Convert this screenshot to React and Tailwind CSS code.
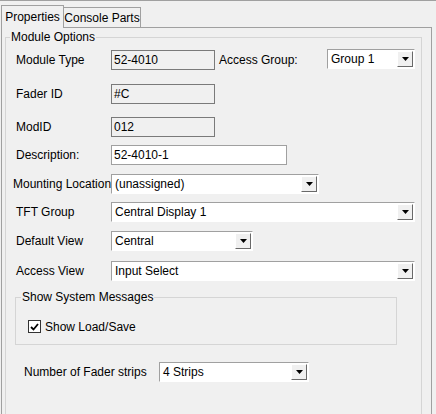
import React from 'react';

const font = { fontFamily: '"Liberation Sans", Arial, sans-serif' };

function Combo({ w, value }) {
  return (
    <div className={`flex h-[20px] items-center justify-between border border-t-[#a0a0a0] border-l-[#a0a0a0] border-r-white border-b-white bg-white ${w}`}>
      <span className="pl-[3px] text-[12px] leading-none text-black">{value}</span>
      <div className="mr-[1px] flex h-[16px] w-[16px] items-center justify-center border border-t-white border-l-white border-r-[#696969] border-b-[#696969] bg-[#f0f0f0]">
        <svg width="7" height="4" viewBox="0 0 7 4"><path d="M0 0h7L3.5 4z" fill="#000" /></svg>
      </div>
    </div>
  );
}

function Box({ w, value, white }) {
  return (
    <div className={`flex h-[20px] items-center border ${white ? 'border-[#a0a0a0] bg-white' : 'border-[#7a7a7a] bg-[#f0f0f0]'} ${w}`}>
      <span className="pl-[2px] text-[12px] leading-none">{value}</span>
    </div>
  );
}

function Row({ label, lw = 'w-[95px]', pl = 'pl-[15px]', mt, children }) {
  return (
    <div className={`flex items-center ${pl} ${mt}`}>
      <span className={`${lw} shrink-0 whitespace-nowrap text-[12px] leading-none`}>{label}</span>
      {children}
    </div>
  );
}

export default function App() {
  return (
    <div className="h-[414px] w-[436px] overflow-hidden bg-[#f0f0f0] text-black" style={font}>
      <div className="h-[1px] bg-[#a0a0a0]" />
      <div className="flex h-[26px] items-end pl-[1px]">
        <div className="relative z-10 -mb-[1px] flex h-[23px] w-[63px] items-center justify-center border border-b-0 border-[#a0a0a0] bg-[#f0f0f0] text-[12px]">Properties</div>
        <div className="flex h-[20px] w-[77px] items-center justify-center whitespace-nowrap border border-b-0 border-l-0 border-[#a0a0a0] text-[12px]">Console Parts</div>
      </div>
      <div className="ml-[1px] h-[400px] w-[431px] border border-[#a0a0a0] pl-[3px] pr-[9px] pt-[9px]">
        <div className="relative h-[380px] border border-[#d5d5d5]">
          <span className="absolute -top-[7px] left-[4px] bg-[#f0f0f0] px-[1px] text-[12px] leading-none">Module Options</span>
          <Row label="Module Type" pl="pl-[10px]" mt="mt-[12px]">
            <Box w="w-[104px]" value="52-4010" />
            <span className="ml-[4px] w-[108px] text-[12px]">Access Group:</span>
            <div className="-mt-[2px]"><Combo w="w-[88px]" value="Group 1" /></div>
          </Row>
          <Row label="Fader ID" pl="pl-[10px]" mt="mt-[14px]"><Box w="w-[104px]" value="#C" /></Row>
          <Row label="ModID" pl="pl-[10px]" mt="mt-[13px]"><Box w="w-[104px]" value="012" /></Row>
          <Row label="Description:" pl="pl-[10px]" mt="mt-[8px]"><Box white w="w-[176px]" value="52-4010-1" /></Row>
          <Row label="Mounting Location" lw="w-[98px]" pl="pl-[7px]" mt="mt-[9px]"><Combo w="w-[208px]" value="(unassigned)" /></Row>
          <Row label="TFT Group" pl="pl-[10px]" mt="mt-[8px]"><Combo w="w-[304px]" value="Central Display 1" /></Row>
          <Row label="Default View" pl="pl-[10px]" mt="mt-[9px]"><Combo w="w-[142px]" value="Central" /></Row>
          <Row label="Access View" pl="pl-[10px]" mt="mt-[10px]"><Combo w="w-[304px]" value="Input Select" /></Row>
          <div className="relative ml-[9px] mt-[16px] h-[48px] w-[382px] border border-[#d5d5d5]">
            <span className="absolute -top-[7px] left-[5px] bg-[#f0f0f0] px-[1px] text-[12px] leading-none">Show System Messages</span>
            <div className="ml-[12px] mt-[22px] flex items-center">
              <div className="flex h-[13px] w-[13px] items-center justify-center border border-[#333] bg-white">
                <svg width="9" height="8" viewBox="0 0 9 8"><path d="M1 4l2.5 2.5L8 1" stroke="#000" strokeWidth="1.8" fill="none" /></svg>
              </div>
              <span className="ml-[4px] text-[12px] leading-none">Show Load/Save</span>
            </div>
          </div>
          <Row label="Number of Fader strips" lw="w-[135px]" pl="pl-[18px]" mt="mt-[17px]"><Combo w="w-[150px]" value="4 Strips" /></Row>
        </div>
      </div>
    </div>
  );
}
